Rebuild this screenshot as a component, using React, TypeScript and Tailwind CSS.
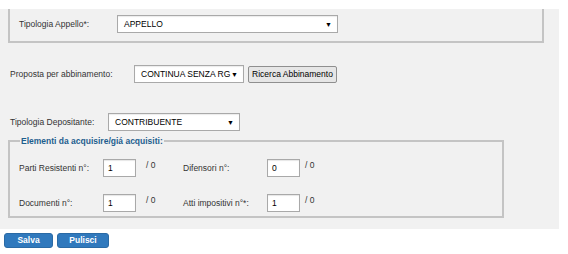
import React from 'react';

const Arrow = () => <span className="text-[7px] leading-none text-black">▼</span>;

function Select({ value, width }: { value: string; width: string }) {
  return (
    <div className={`flex h-[18px] items-center justify-between border border-[#a9a9a9] bg-white pl-[6px] pr-[5px] shadow-[inset_0_1px_1px_rgba(0,0,0,0.08)] ${width}`}>
      <span className="whitespace-nowrap text-black">{value}</span>
      <Arrow />
    </div>
  );
}

function NumInput({ value }: { value: string }) {
  return (
    <div className="flex h-[18px] w-[33px] items-end border border-[#a9a9a9] bg-white pb-[2px] pl-[4px] text-black shadow-[inset_0_1px_1px_rgba(0,0,0,0.1)]">
      {value}
    </div>
  );
}

export default function App() {
  return (
    <div className="h-[254px] w-[568px] overflow-hidden whitespace-nowrap bg-white font-['Liberation_Sans',Arial,sans-serif] text-[8.5px] leading-[12px] text-[#333]">
      <div className="mt-[9px] h-[220px] w-[559px] bg-[#f1f1f1] pl-[8px]">
        {/* top fieldset, cut at the top */}
        <div className="flex h-[34px] w-[536px] items-center border-b-2 border-l-2 border-r-2 border-[#c4c4c4] pb-[2px] pl-[9px]">
          <span className="w-[98px]">Tipologia Appello*:</span>
          <Select value="APPELLO" width="w-[221px]" />
        </div>

        <div className="mt-[22px] flex items-center">
          <span className="ml-[2px] w-[124px]">Proposta per abbinamento:</span>
          <Select value="CONTINUA SENZA RG" width="w-[110px]" />
          <button className="ml-[4px] h-[17px] w-[89px] rounded-[2px] border border-[#8f8f8f] bg-[#e6e6e6] text-[8.5px] leading-none text-black">
            Ricerca Abbinamento
          </button>
        </div>

        <div className="mt-[30px] flex items-center">
          <span className="ml-[2px] w-[98px]">Tipologia Depositante:</span>
          <Select value="CONTRIBUENTE" width="w-[132px]" />
        </div>

        <fieldset className="mt-[4px] w-[496px] border-2 border-[#c4c4c4] pb-[4px] pl-[9px] pr-0 pt-0">
          <legend className="ml-[1px] px-[1px] font-bold leading-[12px] text-[#1d5e8e]">
            Elementi da acquisire/giá acquisiti:
          </legend>
          <div className="mt-[12px] flex items-center">
            <span className="w-[84px]">Parti Resistenti n°:</span>
            <NumInput value="1" />
            <span className="ml-[10px] w-[37px] -translate-y-[3px]">/ 0</span>
            <span className="w-[84px]">Difensori n°:</span>
            <NumInput value="0" />
            <span className="ml-[5px] -translate-y-[3px]">/ 0</span>
          </div>
          <div className="mt-[17px] flex items-center">
            <span className="w-[84px]">Documenti n°:</span>
            <NumInput value="1" />
            <span className="ml-[10px] w-[37px] -translate-y-[3px]">/ 0</span>
            <span className="w-[84px]">Atti impositivi n°*:</span>
            <NumInput value="1" />
            <span className="ml-[5px] -translate-y-[3px]">/ 0</span>
          </div>
        </fieldset>
      </div>

      <div className="ml-[4px] mt-[4px] flex gap-[4px]">
        <button className="h-[15px] w-[49px] rounded-[3px] border border-[#2a6aa5] bg-[#3079bd] text-[8.5px] font-bold leading-none text-white">
          Salva
        </button>
        <button className="h-[15px] w-[52px] rounded-[3px] border border-[#2a6aa5] bg-[#3079bd] text-[8.5px] font-bold leading-none text-white">
          Pulisci
        </button>
      </div>
    </div>
  );
}
